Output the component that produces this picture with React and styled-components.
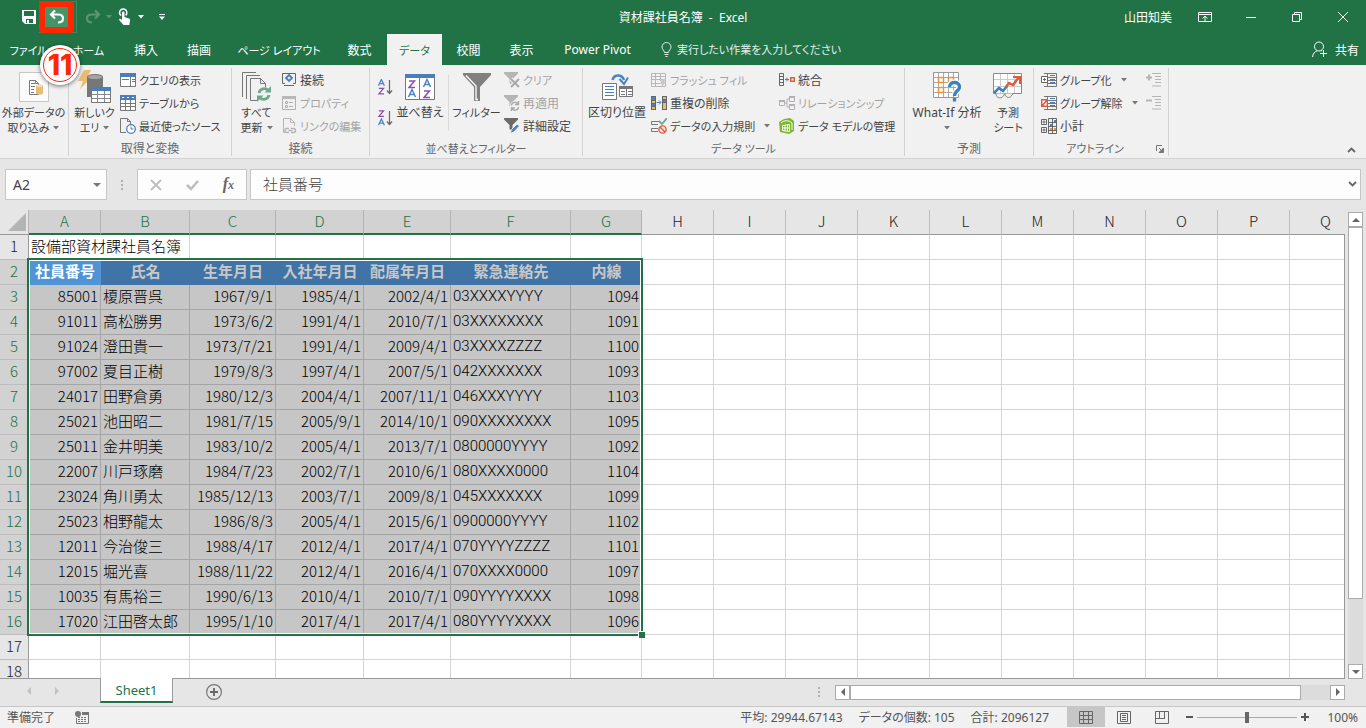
import { useState } from "react";
import styled, { createGlobalStyle } from "styled-components";

const GlobalStyle = createGlobalStyle`
  * {
    box-sizing: border-box;
  }

  body {
    margin: 0;
    background: #e6e6e6;
    color: #444444;
    font-family: "Noto Sans", "Noto Sans CJK JP", sans-serif;
    font-size: 12px;
    font-feature-settings: "palt";
  }

  button, input {
    font: inherit;
    font-feature-settings: inherit;
    color: inherit;
    padding: 0;
    border: none;
    background: none;
    white-space: nowrap;
  }

  svg {
    display: block;
    flex: none;
  }
`;

// labels that are mostly kana are set one step smaller
const labelSize = (label) => (/[ぁ-んァ-ヶー]{2,}/.test(label) ? 11 : 12);

const Window = styled.div`
  display: flex;
  flex-direction: column;
  height: 100vh;
  overflow: hidden;
  position: relative;
`;

/* ---------- title bar ---------- */

const TitleBar = styled.header`
  display: grid;
  grid-template-columns: 1fr auto 1fr;
  align-items: center;
  height: 34px;
  background: #217346;
  color: #ffffff;
`;

const QuickAccess = styled.div`
  display: flex;
  align-items: center;
  padding-left: 20px;
`;

const QuickButton = styled.button`
  display: flex;
  align-items: center;
  justify-content: center;
  width: ${(p) => p.$width}px;
  height: 32px;
  opacity: ${(p) => (p.disabled ? 0.25 : 1)};
`;

const UndoFrame = styled.div`
  display: flex;
  align-items: center;
  width: 38px;
  height: 32px;
  margin-left: 1px;
  margin-right: 6px;
  border: 1px solid #3d8a5e;
  border-left: none;
`;

const UndoButton = styled.button`
  display: flex;
  align-items: center;
  justify-content: center;
  width: 35px;
  height: 32px;
  flex: none;
  border: 6px solid #ff2600;
  border-radius: 4px;
  background: #439467;
`;

const DocTitle = styled.h1`
  margin: 0;
  font-size: 12px;
  font-weight: 400;
  white-space: pre;
`;

const WindowButtons = styled.div`
  display: flex;
  align-items: center;
  justify-content: flex-end;
`;

const UserName = styled.span`
  margin-right: 10px;
`;

const WindowButton = styled.button`
  display: flex;
  align-items: center;
  justify-content: center;
  width: 46px;
  height: 30px;
`;

const StepBadge = styled.div`
  position: absolute;
  left: 40px;
  top: 45px;
  display: flex;
  align-items: center;
  justify-content: center;
  width: 40px;
  height: 40px;
  border-radius: 50%;
  background: #ffffff;
  box-shadow: 0 1px 4px rgba(0, 0, 0, 0.55);
`;

const StepRing = styled.span`
  display: flex;
  align-items: center;
  justify-content: center;
  width: 34px;
  height: 34px;
  border: 1px solid #ff2600;
  border-radius: 50%;
  color: #ff2600;
  font-family: Inter, sans-serif;
  font-size: 28px;
  font-weight: 800;
  line-height: 30px;
`;

/* ---------- tabs ---------- */

const TabBar = styled.nav`
  display: flex;
  align-items: stretch;
  height: 31px;
  background: #217346;
  color: #ffffff;
`;

const Tab = styled.button`
  width: ${(p) => p.$width}px;
  flex: none;
  background: ${(p) => (p.$active ? "#f1f1f1" : "transparent")};
  color: ${(p) => (p.$active ? "#217346" : "#ffffff")};
  font-size: ${(p) => p.$size}px;
`;

const TellMe = styled.label`
  display: flex;
  align-items: center;
  gap: 5px;
  flex: 1;
  margin-left: 14px;

  input {
    flex: 1;
    outline: none;
    font-size: 11px;
  }

  input::placeholder {
    color: #e4efe9;
    opacity: 1;
  }
`;

const ShareButton = styled.button`
  display: flex;
  align-items: center;
  gap: 8px;
  padding-right: 7px;
`;

/* ---------- ribbon ---------- */

const RibbonBar = styled.section`
  display: flex;
  height: 94px;
  flex: none;
  padding-top: 3px;
  border-bottom: 1px solid #d2d2d2;
  background: #f1f1f1;
`;

const Group = styled.div`
  display: flex;
  flex-direction: column;
  width: ${(p) => p.$width}px;
  height: 88px;
  flex: none;
  border-right: 1px solid #d2d2d2;
`;

const GroupBody = styled.div`
  display: flex;
  height: 74px;
  padding-left: ${(p) => p.$indent || 0}px;
`;

const GroupFooter = styled.div`
  display: flex;
  align-items: center;
  height: 14px;
  color: #666666;
  font-size: ${(p) => p.$size || 12}px;
  line-height: 14px;

  span {
    flex: 1;
    text-align: center;
  }
`;

const Launcher = styled.button`
  margin-right: 4px;
`;

const LargeButton = styled.button`
  display: flex;
  flex-direction: column;
  align-items: center;
  width: ${(p) => p.$width}px;
  flex: none;
`;

const LargeIcon = styled.span`
  display: flex;
  align-items: center;
  justify-content: center;
  height: 37px;
`;

const LargeLabel = styled.span`
  display: flex;
  align-items: center;
  justify-content: center;
  gap: 4px;
  height: 15px;
  font-size: ${(p) => p.$size}px;
  line-height: 15px;
`;

const SmallColumn = styled.div`
  display: flex;
  flex-direction: column;
  width: ${(p) => p.$width}px;
  flex: none;
`;

const SmallButton = styled.button`
  display: flex;
  align-items: center;
  gap: 3px;
  height: 23px;
  color: ${(p) => (p.disabled ? "#a3a3a3" : "#444444")};
  font-size: ${(p) => p.$size || 12}px;

  svg:last-child:not(:first-child) {
    margin-left: 6px;
  }
`;

const SortColumn = styled.div`
  display: flex;
  flex-direction: column;
  align-items: center;
  gap: 15px;
  width: 21px;
  padding-top: 11px;
`;

const ThinRule = styled.div`
  width: 1px;
  height: 56px;
  margin: 7px 0 0 4px;
  background: #dadada;
`;

const CollapseButton = styled.button`
  align-self: flex-end;
  margin: 0 10px 5px auto;
`;

/* ---------- formula bar ---------- */

const FormulaRow = styled.div`
  display: flex;
  align-items: stretch;
  height: 51px;
  flex: none;
  padding: 10px 5px;
`;

const Field = styled.div`
  display: flex;
  align-items: center;
  border: 1px solid #c6c6c6;
  background: #fdfdfd;
`;

const NameField = styled(Field)`
  width: 102px;
  padding: 0 5px 0 7px;

  input {
    flex: 1;
    min-width: 0;
    font-size: 14px;
  }
`;

const Grip = styled.span`
  display: flex;
  align-items: center;
  justify-content: center;
  width: ${(p) => p.$width}px;
  margin-left: ${(p) => (p.$push ? "auto" : 0)};
`;

const FormulaTools = styled(Field)`
  width: 110px;
  justify-content: space-around;
  margin-right: 3px;
`;

const FormulaField = styled(Field)`
  flex: 1;
  padding: 0 3px 2px 12px;

  input {
    flex: 1;
    font-family: "Noto Sans CJK JP", sans-serif;
    font-size: 15px;
    font-weight: 300;
    font-feature-settings: normal;
  }
`;

const FxButton = styled.button`
  color: #666666;
  font-family: "Liberation Serif", serif;
  font-size: 16px;
  font-style: italic;
  font-weight: 700;
  line-height: 16px;

  small {
    font-size: 12px;
  }
`;

/* ---------- sheet ---------- */

const SheetArea = styled.main`
  display: flex;
  flex: 1;
  min-height: 0;
`;

const GridPane = styled.div`
  position: relative;
  flex: 1;
  min-width: 0;
  overflow: hidden;
  border-bottom: 1px solid #999999;
`;

const Grid = styled.table`
  width: 1362px;
  table-layout: fixed;
  border-spacing: 0;
  background: #ffffff;
  color: #000000;
  font-family: "Noto Sans CJK JP", sans-serif;
  font-size: 15px;
  font-weight: 300;
  font-feature-settings: normal;
`;

const ColHead = styled.th`
  height: 25px;
  padding: 0 0 2px;
  border-right: 1px solid ${(p) => (p.$on ? "#b4b4b4" : "#bdbdbd")};
  border-bottom: ${(p) => (p.$on ? "2px solid #217346" : "1px solid #999999")};
  background: ${(p) => (p.$on ? "#d2d2d2" : "#e6e6e6")};
  color: ${(p) => (p.$on ? "#217346" : "#222222")};
  font-weight: inherit;
  line-height: 20px;
`;

const Corner = styled.th`
  height: 25px;
  padding: 0 0 0 8px;
  border-right: 1px solid #b4b4b4;
  border-bottom: 1px solid #999999;
  background: #e6e6e6;
`;

const RowHead = styled.th`
  height: 25px;
  padding: 0 0 2px;
  border-right: 1px solid #999999;
  border-bottom: 1px solid #bdbdbd;
  background: ${(p) => (p.$on ? "#d2d2d2" : "#e6e6e6")};
  color: ${(p) => (p.$on ? "#217346" : "#222222")};
  font-weight: inherit;
  line-height: 20px;
`;

const Cell = styled.td`
  height: 25px;
  padding: 0 2px 2px;
  border-right: 1px solid ${(p) => (p.$on ? "#a5a5a5" : "#d4d4d4")};
  border-bottom: 1px solid ${(p) => (p.$on ? "#a5a5a5" : "#d4d4d4")};
  background: ${(p) => (p.$on ? "#c6c6c6" : "#ffffff")};
  text-align: ${(p) => p.$align || "left"};
  line-height: 20px;
  white-space: nowrap;
`;

const PhoneCell = styled(Cell)`
  font-family: Roboto, sans-serif;
`;

const FieldCell = styled.td`
  height: 25px;
  padding: 0 0 3px;
  background: ${(p) => (p.$current ? "#5094d4" : "#4074a6")};
  color: ${(p) => (p.$current ? "#ffffff" : "#c8c8c8")};
  font-weight: 700;
  line-height: 20px;
  text-align: center;
  white-space: nowrap;
`;

const Selection = styled.div`
  position: absolute;
  left: 27px;
  top: 48px;
  width: 616px;
  height: 378px;
  border: 2px solid #217346;
  box-shadow: inset 0 0 0 1px #ffffff;
  pointer-events: none;

  &::after {
    content: "";
    position: absolute;
    right: -4px;
    bottom: -4px;
    width: 6px;
    height: 6px;
    border: solid #ffffff;
    border-width: 1px 0 0 1px;
    background: #217346;
  }
`;

const VerticalScroll = styled.div`
  display: flex;
  flex-direction: column;
  width: 15px;
  margin: 2px 3px 0;
  background: #dcdcdc;
`;

const PaneEdge = styled.div`
  width: 1px;
  margin-top: 24px;
  background: #999999;
`;

const ScrollButton = styled.button`
  display: flex;
  align-items: center;
  justify-content: center;
  width: 15px;
  height: 15px;
  flex: none;
  border: 1px solid #ababab;
  background: #ffffff;
`;

const ScrollThumb = styled.div`
  flex: ${(p) => p.$share};
  border: 1px solid #ababab;
  background: #ffffff;
`;

const ScrollGap = styled.div`
  flex: ${(p) => p.$share};
`;

/* ---------- sheet tabs and status ---------- */

const SheetTabs = styled.div`
  display: flex;
  height: 28px;
  flex: none;
  padding-bottom: 1px;
  border-bottom: 1px solid #c6c6c6;
`;

const SheetNav = styled.div`
  display: flex;
  align-items: center;
  gap: 20px;
  width: 100px;
  padding: 0 0 2px 25px;
`;

const SheetTab = styled.button`
  width: 73px;
  height: 25px;
  margin-top: -1px;
  border: 1px solid #999999;
  border-top: none;
  border-bottom: 2px solid #217346;
  background: #ffffff;
  color: #217346;
  font-size: 13px;
  z-index: 1;
`;

const AddSheet = styled.button`
  align-self: center;
  margin-left: 33px;
`;

const HorizontalScroll = styled.div`
  display: flex;
  align-self: center;
  width: 510px;
  height: 15px;
  margin-right: 21px;
  background: #dcdcdc;
`;

const StatusBar = styled.footer`
  display: flex;
  align-items: stretch;
  height: 21px;
  flex: none;
  padding-bottom: 1px;
  background: #f1f1f1;
  color: #555555;
`;

const StatusText = styled.span`
  display: flex;
  align-items: center;
  gap: 20px;
  padding-left: 7px;
  margin-right: auto;
`;

const Totals = styled.div`
  display: flex;
  align-items: center;
  gap: 16px;
  margin-right: 18px;
`;

const ViewButton = styled.button`
  display: flex;
  align-items: center;
  justify-content: center;
  width: 38px;
  background: ${(p) => (p.$active ? "#c6c6c6" : "transparent")};
`;

const ZoomControl = styled.div`
  display: flex;
  align-items: center;
  gap: 4px;
  margin-left: 5px;
`;

const ZoomRange = styled.input`
  width: 100px;
  height: 12px;
  margin: 0;
  appearance: none;
  background: linear-gradient(#ababab, #ababab) center / 100% 1px no-repeat;

  &::-webkit-slider-thumb {
    appearance: none;
    width: 4px;
    height: 11px;
    background: #666666;
  }
`;

const ZoomValue = styled.span`
  display: flex;
  align-items: center;
  justify-content: flex-end;
  width: 57px;
  flex: none;
  padding-right: 8px;
`;

/* ---------- icons ---------- */

const Icon = ({ w = 16, h = 16, children, ...rest }) => (
  <svg width={w} height={h} viewBox={`0 0 ${w} ${h}`} fill="none" aria-hidden="true" {...rest}>
    {children}
  </svg>
);

const Caret = ({ color = "#777777" }) => (
  <Icon w={6} h={4}><path d="M0 0h6L3 3.5z" fill={color} /></Icon>
);

const SaveIcon = () => (
  <Icon>
    <path d="M1 1h14v14H4l-3-3z" fill="#fff" />
    <path d="M3 2h10v5H3zM5 10h7v4H5z" fill="#217346" />
    <path d="M6 11h2v3H6z" fill="#fff" />
  </Icon>
);

const UndoIcon = () => (
  <Icon>
    <path d="M6 1.500L2 5.500l4 4M2.500 5.500H9c3 0 5 1.500 5 4s-2 4-5 4" stroke="#fff" strokeWidth="2.200" />
  </Icon>
);

const RedoIcon = () => (
  <Icon>
    <path d="M10 1.500l4 4-4 4M13.500 5.500H7c-3 0-5 1.500-5 4s2 4 5 4" stroke="#fff" strokeWidth="2.200" />
  </Icon>
);

const TouchIcon = () => (
  <Icon w={14} h={18}>
    <path d="M3.200 7.500C1.800 6.500 1.200 5.200 1.700 3.600 2.300 2 3.700 1 5.200 1s3 1 3.500 2.600c.4 1.500 0 2.800-1 3.800" stroke="#fff" strokeWidth="1.500" />
    <path d="M4 4.500c0-1.500 2.500-1.500 2.500 0V9l4.500 1.500c1 .4 1.300 1 1 2L11.300 17H5.500L1.200 12c-.5-1 .6-1.800 1.600-1L4 12z" fill="#fff" />
  </Icon>
);

const CustomizeIcon = () => (
  <Icon w={6} h={6}><path d="M0 0h6v1H0zM0 2.500h6L3 6z" fill="#fff" /></Icon>
);

const RibbonOptionsIcon = () => (
  <Icon w={14} h={12} stroke="#fff">
    <path d="M.5 1.500h13v9H.5zM.5 3.500h13M7 10V5.500M4.500 7.500L7 5l2.500 2.500" />
  </Icon>
);

const MinimizeIcon = () => (
  <Icon w={10} h={10} stroke="#fff"><path d="M0 5.500h10" /></Icon>
);

const RestoreIcon = () => (
  <Icon w={10} h={10} stroke="#fff"><path d="M.5 2.500h7v7h-7zM2.500 2.500v-2h7v7h-2" /></Icon>
);

const CloseIcon = () => (
  <Icon w={10} h={10} stroke="#fff"><path d="M0 0l10 10M10 0L0 10" /></Icon>
);

const BulbIcon = () => (
  <Icon w={11} h={15} stroke="#e4efe9">
    <path d="M3.500 10.500c0-2-2.500-3-2.500-5.500a4.500 4.500 0 0 1 9 0c0 2.500-2.500 3.500-2.500 5.500zM3.500 12.500h4M4.500 14.500h2" />
  </Icon>
);

const ShareIcon = () => (
  <Icon w={15} h={17} stroke="#fff">
    <circle cx="7" cy="5.500" r="4.500" />
    <path d="M.6 16c.3-3.500 2-5.200 4.300-6M9 9.500l1 .5M11.500 9v7M8 12.500h7" />
  </Icon>
);

const ExternalDataIcon = () => (
  <Icon w={30} h={30}>
    <path d="M.5.5h29v29H.5z" fill="#fbfbfb" stroke="#c6c6c6" />
    <path d="M10.500 8.500h6l3 3v11h-9z" stroke="#777" fill="#fff" />
    <path d="M12 11.500h4M12 14.500h4M12 17.500h3M12 20.500h3M16.500 8.500v3h3" stroke="#777" />
    <path d="M17 14c0-2 7-2 7 0v7c0 2-7 2-7 0z" fill="#eabb72" />
    <ellipse cx="20.500" cy="14" rx="3" ry="1.200" fill="#f7dfb2" />
  </Icon>
);

const NewQueryIcon = () => (
  <Icon w={34} h={34}>
    <path d="M6 0h7L9 8h4L2 19l3-8H0z" fill="#eabb72" />
    <path d="M9 7c0-4 16-4 16 0v20H9z" fill="#777" />
    <ellipse cx="17" cy="7" rx="7" ry="2" fill="#a5a5a5" />
    <path d="M13.500 17.500h19v15h-19z" fill="#fff" stroke="#777" />
    <path d="M13 17h20v4H13z" fill="#4a7ebb" />
    <path d="M19.500 21v11M26.500 21v11M14 24.500h18M14 28.500h18" stroke="#888" />
  </Icon>
);

const QueryViewIcon = () => (
  <Icon stroke="#777">
    <path d="M.5 1.500h15v13H.5z" fill="#fff" />
    <path d="M0 1h16v4H0z" fill="#4a7ebb" stroke="none" />
    <path d="M10.500 5v9M2 7.500h7M12 7.500h3M12 9.500h3" />
  </Icon>
);

const TableIcon = () => (
  <Icon stroke="#777">
    <path d="M.5.5h15v15H.5z" fill="#fff" />
    <path d="M0 0h16v5H0z" fill="#4a7ebb" stroke="none" />
    <path d="M5.500 5v10M10.500 5v10M1 8.500h14M1 11.500h14" />
    <path d="M2 2.500h2M7 2.500h2M12 2.500h2" stroke="#fff" />
  </Icon>
);

const RecentIcon = () => (
  <Icon>
    <path d="M6 14.500H.5V.5h7l3 3V6M7.500.5v3h3" stroke="#777" />
    <circle cx="11" cy="11" r="4.300" fill="#fff" stroke="#4a7ebb" strokeWidth="1.300" />
    <path d="M11 8.500V11h2.500" stroke="#4a7ebb" />
  </Icon>
);

const RefreshAllIcon = () => (
  <Icon w={30} h={32}>
    <path d="M.5 26V1.500H14M4.500 28V4.500H18M8.500 29.500V7.500h10l5 5V16M18.500 7.500v5h5M8.500 29.500H15" stroke="#777" />
    <path d="M17 22a5.500 5.500 0 0 1 9.500-2.500M27 24a5.500 5.500 0 0 1-9.500 2.500" stroke="#6fa98c" strokeWidth="2.800" />
    <path d="M29 15v6.500h-6.500zM15 31v-6.500h6.500z" fill="#6fa98c" />
  </Icon>
);

const ConnectIcon = () => (
  <Icon>
    <path d="M4 11.500H1.500v-10h13v10H12" stroke="#666" />
    <path d="M8 3L11 6 8 9 5 6z" stroke="#4a7ebb" strokeWidth="1.800" />
    <path d="M3 13.500h10" stroke="#666" />
  </Icon>
);

const PropertiesIcon = () => (
  <Icon stroke="#b0b0b0">
    <path d="M1.500 1.500h13v13h-13z" />
    <path d="M1 1h14v3H1z" fill="#b8b8b8" stroke="none" />
    <path d="M4.500 6.500h2v2h-2zM4.500 10.500h2v2h-2zM8 7.500h4M8 11.500h4" />
  </Icon>
);

const EditLinksIcon = () => (
  <Icon stroke="#b5b5b5">
    <path d="M2.500 12V.5h7l4 4V8M9.500.5v4h4M2.500 12v2.500H4" />
    <path d="M8 14.500H6a2 2 0 0 1 0-4h2M10 10.500h2.500a2 2 0 0 1 0 4H10M7.500 12.500h4" strokeWidth="1.400" />
  </Icon>
);

const LetterA = ({ x, y, s = 1 }) => (
  <path transform={`translate(${x} ${y}) scale(${s})`} d="M.5 8L4 .5 7.500 8M2 5.500h4" stroke="#4a86c5" strokeWidth="1.500" />
);

const LetterZ = ({ x, y, s = 1 }) => (
  <path transform={`translate(${x} ${y}) scale(${s})`} d="M1 1h5.500L1 7.500H7" stroke="#8a50a8" strokeWidth="1.500" />
);

const SortIcon = ({ descending }) => (
  <Icon w={15} h={16}>
    <LetterA x={0} y={descending ? 8.500 : 0} s={0.850} />
    <LetterZ x={0} y={descending ? 0 : 8.500} s={0.850} />
    <path d="M11.500 1v13M9 11.500l2.500 3 2.500-3" stroke="#666" strokeWidth="1.200" />
  </Icon>
);

const SortDialogIcon = () => (
  <Icon w={30} h={26}>
    <path d="M.5.5h29v25H.5z" fill="#fff" stroke="#777" />
    <path d="M0 0h30v4H0z" fill="#4a7ebb" />
    <path d="M14.500 4v21" stroke="#777" />
    <LetterZ x={3} y={6} />
    <LetterA x={3} y={15} />
    <LetterA x={18} y={5} />
    <LetterZ x={18} y={16} />
  </Icon>
);

const FilterIcon = () => (
  <Icon w={28} h={28}>
    <path d="M0 0h28v2L17 14v14h-6V14L0 2z" fill="#808080" />
    <path d="M3 2.500L13 13v13.500h2" stroke="#fff" strokeWidth="1.300" />
  </Icon>
);

const FilterSmall = ({ color = "#6b6b6b", children }) => (
  <Icon>
    <path d="M0 0h14v1.500L8.500 7v6l-3-2V7L0 1.500z" fill={color} />
    {children}
  </Icon>
);

const ClearIcon = () => (
  <FilterSmall color="#b5b5b5">
    <path d="M7 7l8 8M15 7l-8 8" stroke="#f1f1f1" strokeWidth="4" />
    <path d="M7 7l8 8M15 7l-8 8" stroke="#a8a8a8" strokeWidth="2" />
  </FilterSmall>
);

const ReapplyIcon = () => (
  <FilterSmall color="#b5b5b5">
    <circle cx="11" cy="11" r="5" fill="#f1f1f1" />
    <path d="M7.500 10.500a3.500 3.500 0 0 1 6.500-1.500M14.500 12a3.500 3.500 0 0 1-6.500 1.500M14.500 6v3.500H11M7.500 16v-3H11" stroke="#a8a8a8" strokeWidth="1.400" />
  </FilterSmall>
);

const AdvancedIcon = () => (
  <FilterSmall><path d="M6 15.500l1.500-4L13 6l2.500 2L10 14z" fill="#4a86c5" stroke="#f1f1f1" /></FilterSmall>
);

const TextToColumnsIcon = () => (
  <Icon w={31} h={26}>
    <path d="M.5 9.500h14v16H.5z" fill="#fff" stroke="#777" />
    <path d="M3 12.500h9M3 15.500h9M3 18.500h9M3 21.500h9" stroke="#4a7ebb" />
    <path d="M17.500 12.500h13v10h-13z" fill="#fff" stroke="#777" />
    <path d="M17 12h14v3H17z" fill="#777" />
    <path d="M24.500 15v8M19 17.500h4M26 17.500h4M19 20.500h4M26 20.500h4" stroke="#777" />
    <path d="M10.500 6C12 0 20 0 22 6" stroke="#4a86c5" strokeWidth="2.500" />
    <path d="M17.500 5L22 10l4-6.500" stroke="#4a86c5" strokeWidth="2" />
  </Icon>
);

const FlashFillIcon = () => (
  <Icon stroke="#bcb6bc">
    <path d="M.5 1.500h14v13H.5zM1 4.500h13M1 7.500h10M1 11.500h8M4.500 2v12M9.500 2v7" />
    <path d="M11 7h4l-2 3h2l-5 6 1-4H9z" fill="#c9c4c9" stroke="none" />
  </Icon>
);

const DuplicatesIcon = () => (
  <Icon>
    <path d="M0 1h5v14H0zM11 1h5v14h-5z" fill="#666" />
    <path d="M1 2h3v3H1zM1 9h3v2H1zM12 5h3v2h-3z" fill="#4a86c5" />
    <path d="M1 6h3v2H1zM1 12h3v2H1zM12 2h3v2h-3zM12 8h3v6h-3z" fill="#eabb72" />
    <path d="M5.500 7.500h4M8 5.500l2 2-2 2" stroke="#4a7ebb" />
  </Icon>
);

const ValidationIcon = () => (
  <Icon>
    <path d="M8 3.500H.5v3H7M7 10.500H.5v3H7" stroke="#777" />
    <path d="M8 3l3 3 5-6" stroke="#6fa98c" strokeWidth="1.800" />
    <circle cx="11.500" cy="11.500" r="3.600" stroke="#dd5b3c" strokeWidth="1.400" />
    <path d="M9 9l5 5" stroke="#dd5b3c" strokeWidth="1.400" />
  </Icon>
);

const ConsolidateIcon = () => (
  <Icon>
    <path d="M.5 1.500h4v12h-4zM1 4.500h3M1 7.500h3M1 10.500h3" stroke="#666" />
    <path d="M6 7.500h4M8 5.500v4" stroke="#4a7ebb" />
    <path d="M11.700 5.700h3.600v3.600h-3.600z" stroke="#dd5b3c" strokeWidth="1.500" />
  </Icon>
);

const RelationIcon = () => (
  <Icon stroke="#b5b0b5">
    <path d="M.5 5.500h5v5h-5zM10.500 1.500h5v5h-5zM10.500 9.500h5v5h-5zM5.500 8H8M8 4v8M8 4h2.500M8 12h2.500" />
    <path d="M0 5h6v2H0zM10 1h6v2h-6zM10 9h6v2h-6z" fill="#b5b0b5" stroke="none" />
  </Icon>
);

const DataModelIcon = () => (
  <Icon>
    <path d="M0 4l5-3 6-1 4 3v10l-5 3-9-2z" fill="#7cb82f" />
    <path d="M2 5c3-3 8-3 11 0v7M3.500 7.500l7-1v7l-7-1zM3.500 10h7M6 7v6M8.500 7v6" stroke="#fff" />
  </Icon>
);

const WhatIfIcon = () => (
  <Icon w={28} h={30}>
    <path d="M.5.5h25v25H.5z" fill="#fff" stroke="#999" />
    <path d="M5.500 1v24M10.500 1v24M15.500 1v24M20.500 1v24M1 5.500h24M1 10.500h24M1 15.500h24M1 20.500h24" stroke="#aaa" />
    <path d="M5.500 5.500h5v5h-5zM15.500 5.500h5v5h-5zM5.500 15.500h5v5h-5z" fill="#fff" stroke="#e9923e" strokeWidth="1.500" />
    <path d="M16.500 15c0-6 10-6 10 0 0 4-5 3.500-5 9" stroke="#fbfbfb" strokeWidth="6" />
    <path d="M16.500 15c0-6 10-6 10 0 0 4-5 3.500-5 9M21.500 26v3.500" stroke="#3f80bf" strokeWidth="3.300" />
  </Icon>
);

const ForecastIcon = () => (
  <Icon w={30} h={27}>
    <path d="M.5.5h28v20H.5z" fill="#fff" stroke="#888" />
    <path d="M7.500 1v19M14.500 1v19M21.500 1v19M1 6.500h27M1 13.500h27" stroke="#ccc" />
    <path d="M3 20.500c0 4 3 5 6 4l3-4M12 20.500c0 4 4 5 6 3l2-3" stroke="#888" fill="#f1f1f1" />
    <path d="M1 20l5-5 4 3 4-5" stroke="#3f80bf" strokeWidth="2.500" />
    <path d="M13 14l3-4 4 2 6-8" stroke="#dd5b3c" strokeWidth="2.500" />
    <path d="M20 4h7v7" stroke="#dd5b3c" strokeWidth="2" />
  </Icon>
);

const GroupIcon = ({ remove }) => (
  <Icon>
    <path d="M3 1.500h12.500v13H3M6.500 1.500v13M7 5.500h8M7 8.500h8M7 11.500h8" stroke="#777" />
    <path d="M9 3.500h5M9 7.500h5M9 10.500h5" stroke="#4a7ebb" />
    {remove ? (
      <path d="M.7 4.700h5.600v6.600H.7zM1 11l5-6" fill="#fff" stroke="#dd5b3c" strokeWidth="1.400" />
    ) : (
      <path d="M.5 4.500h6v6h-6zM3.500 6v3M2 7.500h3" fill="#fff" stroke="#666" />
    )}
  </Icon>
);

const SubtotalIcon = () => (
  <Icon stroke="#666">
    <path d="M.5 1.500h5v5h-5zM3 2.500v3M1.500 4h3M.5 9.500h5v5h-5zM3 10.500v3M1.500 12h3M7.500.5h8v15h-8zM11.500 1v14M8 4.500h7M8 8.500h7M8 12.500h7" />
    <path d="M9 6h2v2H9zM13 2h2v2h-2z" fill="#4a7ebb" stroke="none" />
    <path d="M9 10h2v2H9zM13 10h2v2h-2z" fill="#e9923e" stroke="none" />
  </Icon>
);

const DetailIcon = ({ show }) => (
  <Icon w={15} h={14} stroke="#b5b5b5">
    <path d="M0 4.500h6" strokeWidth="2" />
    {show && <path d="M3 1.500v6" strokeWidth="2" />}
    <path d="M6 .5h9M9 3.500h6M9 6.500h6M9 9.500h6M6 13h9" />
  </Icon>
);

const LauncherIcon = () => (
  <Icon w={8} h={8} stroke="#777">
    <path d="M.5 6V.5H6M3 3l3 3" />
    <path d="M7.500 3v4.500H3z" fill="#777" />
  </Icon>
);

const ChevronIcon = ({ up }) => (
  <Icon w={9} h={6}>
    <path d={up ? "M1 5l3.500-3.500L8 5" : "M1 1l3.500 3.500L8 1"} stroke="#666" strokeWidth="1.800" />
  </Icon>
);

const DotsIcon = () => (
  <Icon w={2} h={10}><path d="M0 0h2v2H0zM0 4h2v2H0zM0 8h2v2H0z" fill="#b0b0b0" /></Icon>
);

const CrossIcon = () => (
  <Icon w={12} h={12}><path d="M1 1l10 10M11 1L1 11" stroke="#bdbdbd" strokeWidth="1.800" /></Icon>
);

const CheckIcon = () => (
  <Icon w={13} h={12}><path d="M1 6l4 4 7-8" stroke="#bdbdbd" strokeWidth="2.500" /></Icon>
);

const Arrow = ({ dir, color = "#666666" }) => {
  const paths = {
    up: "M0 6l4-4 4 4z",
    down: "M0 2l4 4 4-4z",
    left: "M6 0L2 4l4 4z",
    right: "M2 0l4 4-4 4z",
  };
  return <Icon w={8} h={8}><path d={paths[dir]} fill={color} /></Icon>;
};

const AddIcon = () => (
  <Icon>
    <circle cx="8" cy="8" r="7.400" stroke="#777" strokeWidth="1.200" />
    <path d="M8 4v8M4 8h8" stroke="#666" strokeWidth="1.800" />
  </Icon>
);

const MacroIcon = () => (
  <Icon w={14} h={13}>
    <circle cx="3" cy="3" r="3" fill="#777" />
    <path d="M7 1.500h6.500v11H1.500V7" stroke="#777" />
    <path d="M7 1h7v3H7z" fill="#777" />
    <path d="M3 6.500h9M3 8.500h9M3 10.500h9" stroke="#777" strokeDasharray="2 1" />
  </Icon>
);

const NormalViewIcon = () => (
  <Icon w={14} h={13} stroke="#666"><path d="M.5.5h13v12H.5zM4.500.5v12M9.500.5v12M.5 4.500h13M.5 8.500h13" /></Icon>
);

const PageViewIcon = () => (
  <Icon w={14} h={13} stroke="#666"><path d="M.5.5h13v12H.5zM3.500 2.500h7v8h-7zM5 4.500h4M5 6.500h4M5 8.500h4" /></Icon>
);

const BreakViewIcon = () => (
  <Icon w={14} h={13} stroke="#666"><path d="M.5.5h13v12H.5zM4.500 0v7.500M9.500 0v7.500M1 7.500h9" /></Icon>
);

/* ---------- data ---------- */

const tabs = [
  ["ファイル", 57],
  ["ホーム", 63],
  ["挿入", 52],
  ["描画", 54],
  ["ページ レイアウト", 106],
  ["数式", 55],
  ["データ", 55],
  ["校閲", 53],
  ["表示", 53],
  ["Power Pivot", 99],
];

const columns = [
  ["A", 72], ["B", 89], ["C", 86], ["D", 88], ["E", 87], ["F", 120], ["G", 71],
  ["H", 72], ["I", 72], ["J", 72], ["K", 72], ["L", 72], ["M", 72], ["N", 72],
  ["O", 72], ["P", 72], ["Q", 72],
];

const fields = ["社員番号", "氏名", "生年月日", "入社年月日", "配属年月日", "緊急連絡先", "内線"];

const employees = [
  ["85001", "榎原晋呉", "1967/9/1", "1985/4/1", "2002/4/1", "03XXXXYYYY", "1094"],
  ["91011", "高松勝男", "1973/6/2", "1991/4/1", "2010/7/1", "03XXXXXXXX", "1091"],
  ["91024", "澄田貴一", "1973/7/21", "1991/4/1", "2009/4/1", "03XXXXZZZZ", "1100"],
  ["97002", "夏目正樹", "1979/8/3", "1997/4/1", "2007/5/1", "042XXXXXXX", "1093"],
  ["24017", "田野倉勇", "1980/12/3", "2004/4/1", "2007/11/1", "046XXXYYYY", "1103"],
  ["25021", "池田昭二", "1981/7/15", "2005/9/1", "2014/10/1", "090XXXXXXXX", "1095"],
  ["25011", "金井明美", "1983/10/2", "2005/4/1", "2013/7/1", "0800000YYYY", "1092"],
  ["22007", "川戸琢磨", "1984/7/23", "2002/7/1", "2010/6/1", "080XXXX0000", "1104"],
  ["23024", "角川勇太", "1985/12/13", "2003/7/1", "2009/8/1", "045XXXXXXX", "1099"],
  ["25023", "相野龍太", "1986/8/3", "2005/4/1", "2015/6/1", "0900000YYYY", "1102"],
  ["12011", "今治俊三", "1988/4/17", "2012/4/1", "2017/4/1", "070YYYYZZZZ", "1101"],
  ["12015", "堀光喜", "1988/11/22", "2012/4/1", "2016/4/1", "070XXXX0000", "1097"],
  ["10035", "有馬裕三", "1990/6/13", "2010/4/1", "2010/7/1", "090YYYYXXXX", "1098"],
  ["17020", "江田啓太郎", "1995/1/10", "2017/4/1", "2017/4/1", "080YYYYXXXX", "1096"],
];

/* ---------- parts ---------- */

const Large = ({ icon, lines, width, caret }) => (
  <LargeButton $width={width}>
    <LargeIcon>{icon}</LargeIcon>
    {lines.map((line, i) => (
      <LargeLabel key={i} $size={labelSize(lines.join(""))}>
        {line}
        {caret && i === lines.length - 1 && <Caret />}
      </LargeLabel>
    ))}
  </LargeButton>
);

const Small = ({ icon, label, caret, disabled }) => (
  <SmallButton disabled={disabled} $size={labelSize(label)}>
    {icon}
    <span>{label}</span>
    {caret && <Caret />}
  </SmallButton>
);

const Ribbon = () => (
  <RibbonBar>
    <Group $width={69}>
      <GroupBody>
        <Large width={67} icon={<ExternalDataIcon />} lines={["外部データの", "取り込み"]} caret />
      </GroupBody>
    </Group>
    <Group $width={163}>
      <GroupBody>
        <Large width={51} icon={<NewQueryIcon />} lines={["新しいク", "エリ"]} caret />
        <SmallColumn $width={111}>
          <Small icon={<QueryViewIcon />} label="クエリの表示" />
          <Small icon={<TableIcon />} label="テーブルから" />
          <Small icon={<RecentIcon />} label="最近使ったソース" />
        </SmallColumn>
      </GroupBody>
      <GroupFooter><span>取得と変換</span></GroupFooter>
    </Group>
    <Group $width={138}>
      <GroupBody>
        <Large width={49} icon={<RefreshAllIcon />} lines={["すべて", "更新"]} caret />
        <SmallColumn $width={88}>
          <Small icon={<ConnectIcon />} label="接続" />
          <Small icon={<PropertiesIcon />} label="プロパティ" disabled />
          <Small icon={<EditLinksIcon />} label="リンクの編集" disabled />
        </SmallColumn>
      </GroupBody>
      <GroupFooter><span>接続</span></GroupFooter>
    </Group>
    <Group $width={213}>
      <GroupBody $indent={5}>
        <SortColumn>
          <button aria-label="昇順"><SortIcon /></button>
          <button aria-label="降順"><SortIcon descending /></button>
        </SortColumn>
        <Large width={48} icon={<SortDialogIcon />} lines={["並べ替え"]} />
        <ThinRule />
        <Large width={55} icon={<FilterIcon />} lines={["フィルター"]} />
        <SmallColumn $width={78}>
          <Small icon={<ClearIcon />} label="クリア" disabled />
          <Small icon={<ReapplyIcon />} label="再適用" disabled />
          <Small icon={<AdvancedIcon />} label="詳細設定" />
        </SmallColumn>
      </GroupBody>
      <GroupFooter $size={11}><span>並べ替えとフィルター</span></GroupFooter>
    </Group>
    <Group $width={322}>
      <GroupBody>
        <Large width={68} icon={<TextToColumnsIcon />} lines={["区切り位置"]} />
        <SmallColumn $width={128}>
          <Small icon={<FlashFillIcon />} label="フラッシュ フィル" disabled />
          <Small icon={<DuplicatesIcon />} label="重複の削除" />
          <Small icon={<ValidationIcon />} label="データの入力規則" caret />
        </SmallColumn>
        <SmallColumn $width={124}>
          <Small icon={<ConsolidateIcon />} label="統合" />
          <Small icon={<RelationIcon />} label="リレーションシップ" disabled />
          <Small icon={<DataModelIcon />} label="データ モデルの管理" />
        </SmallColumn>
      </GroupBody>
      <GroupFooter $size={11}><span>データ ツール</span></GroupFooter>
    </Group>
    <Group $width={129}>
      <GroupBody>
        <Large width={84} icon={<WhatIfIcon />} lines={["What-If 分析", ""]} caret />
        <Large width={38} icon={<ForecastIcon />} lines={["予測", "シート"]} />
      </GroupBody>
      <GroupFooter><span>予測</span></GroupFooter>
    </Group>
    <Group $width={135}>
      <GroupBody $indent={7}>
        <SmallColumn $width={105}>
          <Small icon={<GroupIcon />} label="グループ化" caret />
          <Small icon={<GroupIcon remove />} label="グループ解除" caret />
          <Small icon={<SubtotalIcon />} label="小計" />
        </SmallColumn>
        <SmallColumn $width={16}>
          <SmallButton disabled aria-label="詳細データの表示"><DetailIcon show /></SmallButton>
          <SmallButton disabled aria-label="詳細を表示しない"><DetailIcon /></SmallButton>
        </SmallColumn>
      </GroupBody>
      <GroupFooter $size={11}>
        <span>アウトライン</span>
        <Launcher aria-label="アウトラインの設定"><LauncherIcon /></Launcher>
      </GroupFooter>
    </Group>
    <CollapseButton aria-label="リボンを折りたたむ"><ChevronIcon up /></CollapseButton>
  </RibbonBar>
);

const EmptyCells = ({ from }) => columns.slice(from).map(([name]) => <Cell key={name} />);

const EmployeeRow = ({ number, employee }) => {
  const [id, name, born, joined, assigned, phone, extension] = employee;
  return (
    <tr>
      <RowHead $on>{number}</RowHead>
      <Cell $on $align="right">{id}</Cell>
      <Cell $on>{name}</Cell>
      <Cell $on $align="right">{born}</Cell>
      <Cell $on $align="right">{joined}</Cell>
      <Cell $on $align="right">{assigned}</Cell>
      <PhoneCell $on>{phone}</PhoneCell>
      <Cell $on $align="right">{extension}</Cell>
      <EmptyCells from={7} />
    </tr>
  );
};

const Sheet = () => (
  <Grid>
    <colgroup>
      <col style={{ width: 29 }} />
      {columns.map(([name, width]) => <col key={name} style={{ width }} />)}
    </colgroup>
    <thead>
      <tr>
        <Corner aria-label="すべて選択">
          <Icon w={18} h={18}><path d="M18 0v18H0z" fill="#b4b4b4" /></Icon>
        </Corner>
        {columns.map(([name], i) => <ColHead key={name} $on={i < 7}>{name}</ColHead>)}
      </tr>
    </thead>
    <tbody>
      <tr>
        <RowHead>1</RowHead>
        <Cell colSpan={2}>設備部資材課社員名簿</Cell>
        <EmptyCells from={2} />
      </tr>
      <tr>
        <RowHead $on>2</RowHead>
        {fields.map((field, i) => <FieldCell key={field} $current={i === 0}>{field}</FieldCell>)}
        <EmptyCells from={7} />
      </tr>
      {employees.map((employee, i) => (
        <EmployeeRow key={employee[0]} number={i + 3} employee={employee} />
      ))}
      {[17, 18].map((n) => (
        <tr key={n}>
          <RowHead>{n}</RowHead>
          <EmptyCells from={0} />
        </tr>
      ))}
    </tbody>
  </Grid>
);

const App = () => {
  const [activeTab, setActiveTab] = useState("データ");
  const [formula, setFormula] = useState("社員番号");
  const [cellName, setCellName] = useState("A2");
  const [zoom, setZoom] = useState(100);

  return (
    <>
      <GlobalStyle />
      <Window>
        <TitleBar>
          <QuickAccess>
            <QuickButton $width={18} aria-label="上書き保存"><SaveIcon /></QuickButton>
            <UndoFrame>
              <UndoButton aria-label="元に戻す"><UndoIcon /></UndoButton>
            </UndoFrame>
            <QuickButton $width={20} disabled aria-label="やり直し"><RedoIcon /></QuickButton>
            <QuickButton $width={12} disabled aria-label="やり直しの履歴"><Caret color="#ffffff" /></QuickButton>
            <QuickButton $width={20} aria-label="タッチ/マウス モード"><TouchIcon /></QuickButton>
            <QuickButton $width={12} aria-label="モードの選択"><Caret color="#ffffff" /></QuickButton>
            <QuickButton $width={30} aria-label="ツール バーのカスタマイズ"><CustomizeIcon /></QuickButton>
          </QuickAccess>
          <DocTitle>資材課社員名簿  -  Excel</DocTitle>
          <WindowButtons>
            <UserName>山田知美</UserName>
            <WindowButton aria-label="リボンの表示オプション"><RibbonOptionsIcon /></WindowButton>
            <WindowButton aria-label="最小化"><MinimizeIcon /></WindowButton>
            <WindowButton aria-label="元に戻す (縮小)"><RestoreIcon /></WindowButton>
            <WindowButton aria-label="閉じる"><CloseIcon /></WindowButton>
          </WindowButtons>
        </TitleBar>

        <TabBar>
          {tabs.map(([name, width]) => (
            <Tab
              key={name}
              $width={width}
              $size={labelSize(name)}
              $active={name === activeTab}
              onClick={() => setActiveTab(name)}
            >
              {name}
            </Tab>
          ))}
          <TellMe>
            <BulbIcon />
            <input type="text" placeholder="実行したい作業を入力してください" aria-label="操作アシスト" />
          </TellMe>
          <ShareButton><ShareIcon />共有</ShareButton>
        </TabBar>

        <Ribbon />

        <FormulaRow>
          <NameField>
            <input aria-label="名前ボックス" value={cellName} onChange={(e) => setCellName(e.target.value)} />
            <Arrow dir="down" color="#777777" />
          </NameField>
          <Grip $width={30}><DotsIcon /></Grip>
          <FormulaTools>
            <button aria-label="キャンセル"><CrossIcon /></button>
            <button aria-label="入力"><CheckIcon /></button>
            <FxButton aria-label="関数の挿入">f<small>x</small></FxButton>
          </FormulaTools>
          <FormulaField>
            <input aria-label="数式バー" value={formula} onChange={(e) => setFormula(e.target.value)} />
            <button aria-label="数式バーの展開"><ChevronIcon /></button>
          </FormulaField>
        </FormulaRow>

        <SheetArea>
          <GridPane>
            <Sheet />
            <Selection />
          </GridPane>
          <PaneEdge />
          <VerticalScroll>
            <ScrollButton aria-label="上へ"><Arrow dir="up" /></ScrollButton>
            <ScrollThumb $share={85} />
            <ScrollGap $share={15} />
            <ScrollButton aria-label="下へ"><Arrow dir="down" /></ScrollButton>
          </VerticalScroll>
        </SheetArea>

        <SheetTabs>
          <SheetNav>
            <button aria-label="前のシート"><Arrow dir="left" color="#c0c0c0" /></button>
            <button aria-label="次のシート"><Arrow dir="right" color="#c0c0c0" /></button>
          </SheetNav>
          <SheetTab>Sheet1</SheetTab>
          <AddSheet aria-label="新しいシート"><AddIcon /></AddSheet>
          <Grip $width={32} $push><DotsIcon /></Grip>
          <HorizontalScroll>
            <ScrollButton aria-label="左へ"><Arrow dir="left" /></ScrollButton>
            <ScrollThumb $share={94} />
            <ScrollGap $share={6} />
            <ScrollButton aria-label="右へ"><Arrow dir="right" /></ScrollButton>
          </HorizontalScroll>
        </SheetTabs>

        <StatusBar>
          <StatusText>準備完了<MacroIcon /></StatusText>
          <Totals>
            <span>平均: 29944.67143</span>
            <span>データの個数: 105</span>
            <span>合計: 2096127</span>
          </Totals>
          <ViewButton $active aria-label="標準"><NormalViewIcon /></ViewButton>
          <ViewButton aria-label="ページ レイアウト"><PageViewIcon /></ViewButton>
          <ViewButton aria-label="改ページ プレビュー"><BreakViewIcon /></ViewButton>
          <ZoomControl>
            <button aria-label="縮小" onClick={() => setZoom(zoom - 10)}>
              <Icon w={7} h={8}><path d="M0 4h7" stroke="#555" strokeWidth="2" /></Icon>
            </button>
            <ZoomRange
              type="range"
              min="10"
              max="190"
              aria-label="ズーム"
              value={zoom}
              onChange={(e) => setZoom(Number(e.target.value))}
            />
            <button aria-label="拡大" onClick={() => setZoom(zoom + 10)}>
              <Icon w={8} h={8}><path d="M0 4h8M4 0v8" stroke="#555" strokeWidth="2" /></Icon>
            </button>
          </ZoomControl>
          <ZoomValue>{zoom}%</ZoomValue>
        </StatusBar>

        <StepBadge><StepRing>11</StepRing></StepBadge>
      </Window>
    </>
  );
};

export default App;
